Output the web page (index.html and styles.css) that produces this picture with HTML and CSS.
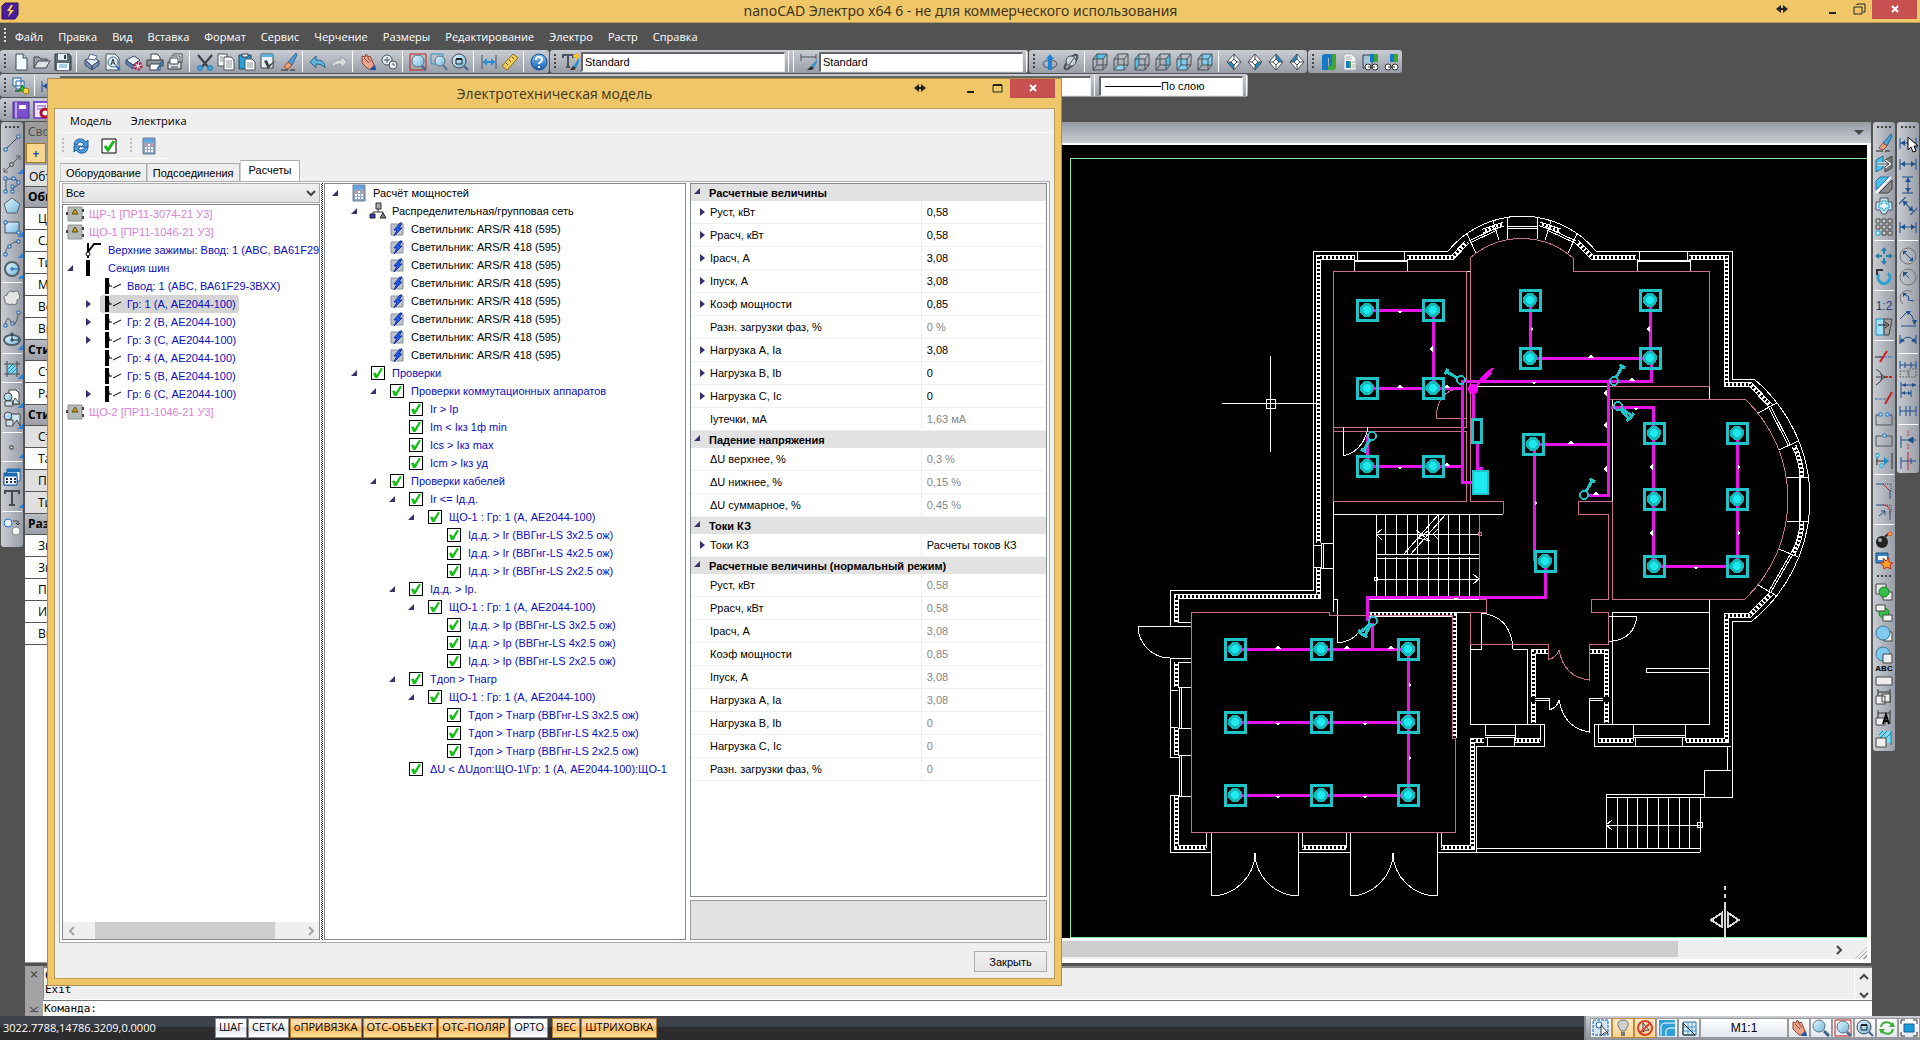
FILE: index.html
```html
<!DOCTYPE html>
<html lang="ru">

<head>
    <meta charset="UTF-8">
    <title>nanoCAD Электро</title>
    <link rel="stylesheet" href="styles.css">
</head>

<body>
    <!-- icons, all drawn on an 18x18 grid -->
    <svg class="sprite" aria-hidden="true">
        <defs>
            <linearGradient id="gblue" x1="0" y1="0" x2="1" y2="1"><stop offset="0" stop-color="#e8f7ff" /><stop offset="1" stop-color="#6fb7dc" /></linearGradient>
            <linearGradient id="ghelp" x1="0" y1="0" x2="0" y2="1"><stop offset="0" stop-color="#7fc0f5" /><stop offset="1" stop-color="#1660b0" /></linearGradient>
            <path id="cube" d="M2 6h10v11H2zM6 1h10v11H6zM2 6l4-5M12 6l4-5M12 17l4-5M2 17l4-5" fill="none" stroke="#4a5056" />
            <path id="dia" d="M9 1l7 8-7 8-7-8zM9 1v5M9 12v5M2 9h4M12 9h4M9 6l3 3-3 3-3-3z" fill="none" stroke="#4a5056" />
            <g id="dimline"><path d="M1 4v11M17 4v11M1 9h16" stroke="#1f4f8c" stroke-width="1" /><path d="M6 6L2 9l4 3zM12 6l4 3-4 3z" fill="#1f4f8c" /></g>
            <g id="linked"><path d="M7 1h4v8H7z" fill="#1478c8" /><path d="M11 1h4v8h-4z" fill="#3fa535" /><circle cx="5" cy="14" r="3" fill="#fff" stroke="#333" /><circle cx="12" cy="14" r="3" fill="#fff" stroke="#333" /><path d="M5 14h7" stroke="#333" /></g>
        </defs>
        <symbol id="i-app" viewBox="0 0 18 18"><path d="M4 1h13v12l-3 4H1V4z" fill="#4b1f9c" stroke="#2c0f6b" /><path d="M10 3L6 9h3l-2 6 6-7H9l3-5z" fill="#ffd84a" /></symbol>
        <symbol id="i-new" viewBox="0 0 18 18"><path d="M4 1h7l4 4v12H4z" fill="#f3fbff" stroke="#3d4854" /><path d="M11 1v4h4" fill="#bfe2f3" stroke="#3d4854" /></symbol>
        <symbol id="i-open" viewBox="0 0 18 18"><path d="M1 15V4h5l2 2h6v3" fill="#9aa0a6" stroke="#3e4347" /><path d="M1 15l4-7h12l-4 7z" fill="#dde2e6" stroke="#3e4347" /></symbol>
        <symbol id="i-save" viewBox="0 0 18 18"><path d="M1 1h14l2 2v14H1z" fill="#5a6a75" stroke="#2f3a42" /><path d="M4 1h9v6H4z" fill="#e7eef2" /><path d="M10 2h2v4h-2z" fill="#31414c" /><path d="M3 10h12v7H3z" fill="#f2f8fb" /><path d="M5 12h8M5 14h8" stroke="#58a9cc" /></symbol>
        <symbol id="i-print" viewBox="0 0 18 18"><path d="M2 7l8-3 6 4-7 5z" fill="#e9eef2" stroke="#384a66" /><path d="M2 7v5l7 5v-4zM9 13v4l7-5V8z" fill="#7790b4" stroke="#384a66" /><path d="M5 6l2-5 7 2-2 4z" fill="#fff" stroke="#4a6aa0" /></symbol>
        <symbol id="i-preview" viewBox="0 0 18 18"><path d="M2 1h9l4 4v12H2z" fill="#eef6fb" stroke="#47525c" /><circle cx="9" cy="9" r="5" fill="#d4ecf8" stroke="#46647a" /><path d="M12 13l4 4" stroke="#2d6fb0" stroke-width="2" /><path d="M7 12l2-6 2 6M8 10h2" fill="none" stroke="#333" /></symbol>
        <symbol id="i-plotset" viewBox="0 0 18 18"><path d="M1 7l8-4 6 4-7 5z" fill="#e9eef2" stroke="#384a66" /><path d="M1 7v4l7 5v-4z" fill="#5b80c0" stroke="#384a66" /><circle cx="13" cy="13" r="3" fill="#fff" stroke="#b0224e" stroke-width="3" stroke-dasharray="2 1" /></symbol>
        <symbol id="i-printer" viewBox="0 0 18 18"><path d="M5 7V1h6l3 3v3" fill="#fff" stroke="#3e4347" /><path d="M1 7h16v6H1z" fill="#8f979d" stroke="#2f3538" /><path d="M4 11h10v6H4z" fill="#fff" stroke="#3e4347" /><path d="M11 17l5-8" stroke="#2d6fb0" stroke-width="2" /></symbol>
        <symbol id="i-plot" viewBox="0 0 18 18"><path d="M6 1h9v9M4 3h9v9" fill="#fff" stroke="#3e4347" /><path d="M1 9h13v7H1z" fill="#d9dfe3" stroke="#2f3538" /><path d="M3 5h8v6H3zM4 14h7" fill="#fff" stroke="#3e4347" /></symbol>
        <symbol id="i-cut" viewBox="0 0 18 18"><path d="M2 2l10 12M16 2L6 14" stroke="#3b3f44" stroke-width="2" /><circle cx="4" cy="15" r="2" fill="none" stroke="#2a8fd0" stroke-width="2" /><circle cx="14" cy="15" r="2" fill="none" stroke="#2a8fd0" stroke-width="2" /></symbol>
        <symbol id="i-copy" viewBox="0 0 18 18"><path d="M1 1h9v12H1z" fill="#fff" stroke="#4b5359" /><path d="M7 4h7l3 3v10H7z" fill="#fff" stroke="#4b5359" /><path d="M9 8h6M9 10h6M9 12h6M9 14h6M3 4h3M3 6h3M3 8h3" stroke="#8b9399" /></symbol>
        <symbol id="i-paste" viewBox="0 0 18 18"><path d="M1 2h12v14H1z" fill="#2a9fd8" stroke="#31414c" /><path d="M4 1h6v3H4z" fill="#e9eef2" stroke="#31414c" /><path d="M7 6h7l3 3v8H7z" fill="#fff" stroke="#4b5359" /><path d="M9 10h6M9 12h6M9 14h6" stroke="#8b9399" /></symbol>
        <symbol id="i-props" viewBox="0 0 18 18"><path d="M2 1h12v14H2z" fill="#e9f1f5" stroke="#3e4347" /><path d="M2 1h12v3H2z" fill="#5cb2d8" /><path d="M5 8l4 8 8-9-7 5-2-5z" fill="#3e4347" /></symbol>
        <symbol id="i-brush" viewBox="0 0 18 18"><path d="M16 0l-8 9 4 3 5-10z" fill="#4d9fd6" stroke="#2c6796" /><path d="M8 9l-4 5 4 2 4-4z" fill="#e9a27f" stroke="#9c4f35" /><path d="M1 17h14" stroke="#222" stroke-dasharray="7 2" /></symbol>
        <symbol id="i-undo" viewBox="0 0 18 18"><path d="M7 3v4c6 0 9 2 9 8-2-3-5-4-9-4v4L1 9z" fill="#5cb2e0" stroke="#2d6384" /></symbol>
        <symbol id="i-redo" viewBox="0 0 18 18"><path d="M11 3v4c-6 0-9 2-9 8 2-3 5-4 9-4v4l6-6z" fill="#d8dbde" stroke="#9a9ea2" /></symbol>
        <symbol id="i-hand" viewBox="0 0 18 18"><path d="M3 3l3 1 1-3 3 3 1-1 2 4 2 5-3 4H9L3 10z" fill="#e9a58d" stroke="#8b4a38" /><path d="M5 5l5 5M8 3l4 6" stroke="#8b4a38" /><path d="M11 16l5-4 1 5h-5z" fill="#1b4fa8" /></symbol>
        <symbol id="i-zoomrt" viewBox="0 0 18 18"><circle cx="7" cy="7" r="5" fill="#e2eef5" stroke="#4b5359" /><path d="M4 7h6M7 4v6" stroke="#4b5359" /><circle cx="13" cy="12" r="4" fill="#f3f6f8" stroke="#4b5359" /><path d="M13 10v2h2" fill="none" stroke="#4b5359" /></symbol>
        <symbol id="i-zoomred" viewBox="0 0 18 18"><path d="M1 1h16v16H1z" fill="none" stroke="#c21e1e" stroke-width="1" /><circle cx="9" cy="8" r="6" fill="url(#gblue)" stroke="#56707f" /><path d="M13 13l4 4" stroke="#4b6a94" stroke-width="3" /></symbol>
        <symbol id="i-zoomwin" viewBox="0 0 18 18"><path d="M1 1h12v10H1z" fill="none" stroke="#2a8fd0" /><circle cx="10" cy="8" r="5" fill="url(#gblue)" stroke="#56707f" /><path d="M13 12l4 5" stroke="#4b6a94" stroke-width="2" /></symbol>
        <symbol id="i-zoom" viewBox="0 0 18 18"><circle cx="7" cy="7" r="6" fill="url(#gblue)" stroke="#56707f" /><path d="M12 12l5 5" stroke="#3f5f8c" stroke-width="3" /></symbol>
        <symbol id="i-zoomext" viewBox="0 0 18 18"><circle cx="8" cy="8" r="7" fill="url(#gblue)" stroke="#3e4347" /><path d="M5 6h6v5H5z" fill="none" stroke="#222" stroke-width="1" /><path d="M5 6h6" stroke="#222" stroke-width="2" /><path d="M13 13l4 4" stroke="#3f5f8c" stroke-width="2" /></symbol>
        <symbol id="i-dist" viewBox="0 0 18 18"><path d="M2 2v14M16 2v14" stroke="#4b5359" /><path d="M3 9h12" stroke="#2a8fd0" stroke-width="2" /><path d="M7 5L3 9l4 4zM11 5l4 4-4 4z" fill="#2a8fd0" /></symbol>
        <symbol id="i-ruler" viewBox="0 0 18 18"><path d="M1 13L12 1l5 4L6 17z" fill="#efcf5c" stroke="#8c6a12" /><path d="M5 10l2 2M8 7l2 2M11 4l2 2" stroke="#6b4f0a" /></symbol>
        <symbol id="i-help" viewBox="0 0 18 18"><circle cx="9" cy="9" r="8" fill="url(#ghelp)" stroke="#1a4f8c" /><path d="M6 7c0-4 6-4 6 0 0 2-3 2-3 4" fill="none" stroke="#fff" stroke-width="2" /><path d="M8 13h2v2H8z" fill="#fff" /></symbol>
        <symbol id="i-tstyle" viewBox="0 0 18 18"><path d="M1 5V2h10v3M6 2v12M4 14h4" fill="none" stroke="#4b5359" stroke-width="2" /><path d="M17 5l-6 9 3 1 3-6z" fill="#2a8fd0" /><path d="M8 17l3-4 3 2-2 2z" fill="#333" /><path d="M14 0v7M11 3h7" stroke="#f6c21a" stroke-width="2" /></symbol>
        <symbol id="i-dstyle" viewBox="0 0 18 18"><path d="M1 1v7M16 1v5M1 4h15" fill="none" stroke="#4b5359" /><path d="M17 6l-6 7 3 2 3-6z" fill="#3795c9" /><path d="M7 17l4-4 3 2-2 2z" fill="#333" /></symbol>
        <symbol id="i-orbit" viewBox="0 0 18 18"><ellipse cx="9" cy="11" rx="7" ry="4" fill="none" stroke="#4b5359" /><path d="M9 1l4 5h-2v11H7V6H5z" fill="#1f83d8" /></symbol>
        <symbol id="i-planet" viewBox="0 0 18 18"><ellipse cx="9" cy="9" rx="9" ry="3" transform="rotate(-50 9 9)" fill="none" stroke="#4b5359" stroke-width="2" /><circle cx="9" cy="8" r="5" fill="#c9d3da" stroke="#4b5359" /><path d="M7 12l5-7" stroke="#4b5359" /></symbol>
        <symbol id="i-cube1" viewBox="0 0 18 18"><path d="M2 6l4-5h10l-4 5z" fill="#55c1ec" /><use href="#cube" /></symbol>
        <symbol id="i-cube2" viewBox="0 0 18 18"><path d="M2 17l4-5h10l-4 5z" fill="#8fd4f0" /><use href="#cube" /></symbol>
        <symbol id="i-cube3" viewBox="0 0 18 18"><path d="M2 6l4-5v11l-4 5z" fill="#55c1ec" /><use href="#cube" /></symbol>
        <symbol id="i-cube4" viewBox="0 0 18 18"><path d="M12 6l4-5v11l-4 5z" fill="#55c1ec" /><use href="#cube" /></symbol>
        <symbol id="i-cube5" viewBox="0 0 18 18"><path d="M2 6h10v11H2z" fill="#7fcdee" /><use href="#cube" /></symbol>
        <symbol id="i-cube6" viewBox="0 0 18 18"><path d="M6 1h10v11H6z" fill="#7fcdee" /><use href="#cube" /></symbol>
        <symbol id="i-dia1" viewBox="0 0 18 18"><path d="M9 1l7 8-7 8-7-8z" fill="#fff" /><path d="M2 9l7 8v-5L6 9z" fill="#1c8cc4" /><use href="#dia" /></symbol>
        <symbol id="i-dia2" viewBox="0 0 18 18"><path d="M9 1l7 8-7 8-7-8z" fill="#fff" /><path d="M16 9l-7 8v-5l3-3z" fill="#1c8cc4" /><use href="#dia" /></symbol>
        <symbol id="i-dia3" viewBox="0 0 18 18"><path d="M9 1l7 8-7 8-7-8z" fill="#fff" /><path d="M16 9L9 1v5l3 3z" fill="#1c8cc4" /><use href="#dia" /></symbol>
        <symbol id="i-dia4" viewBox="0 0 18 18"><path d="M9 1l7 8-7 8-7-8z" fill="#fff" /><path d="M2 9l7-8v5L6 9z" fill="#1c8cc4" /><use href="#dia" /></symbol>
        <symbol id="i-logo" viewBox="0 0 18 18"><path d="M2 17V4q0-3 3-3h7v12h-3V5H8v12z" fill="#1478c8" /><path d="M12 1h4v13q0 3-3 3H8v-4h4z" fill="#3fa535" /></symbol>
        <symbol id="i-logodoc" viewBox="0 0 18 18"><path d="M3 1h8l4 4v12H3z" fill="#f3f4f5" stroke="#a8adb2" /><path d="M5 4h5M5 6h6M11 9h3M11 12h3M11 14h3" stroke="#a8adb2" /><path d="M5 8h3v7H5z" fill="#1478c8" /><path d="M8 8h2v7H8z" fill="#3fa535" /></symbol>
        <symbol id="i-logolink" viewBox="0 0 18 18"><use href="#linked" /></symbol>
        <symbol id="i-logoboard" viewBox="0 0 18 18"><path d="M1 2h9v13H1z" fill="#a9c5d5" stroke="#31414c" /><use href="#linked" x="1" /></symbol>
        <symbol id="i-layers" viewBox="0 0 18 18"><path d="M1 1h8v8H1zM4 4h8v8H4z" fill="#fff" stroke="#1b5fb0" /><path d="M3 14h4l3-6 4 6z" fill="#2db82d" stroke="#176b17" /><circle cx="14" cy="14" r="3" fill="#f6d34a" stroke="#9c7a12" /></symbol>
        <symbol id="i-book" viewBox="0 0 18 18"><path d="M1 1h16v16H1z" fill="#7b4fd0" stroke="#4b2a94" /><path d="M4 1v16" stroke="#fff" /><path d="M7 4h7v4H7z" fill="#fff" /></symbol>
        <symbol id="i-bookgear" viewBox="0 0 18 18"><path d="M1 1h16v16H1z" fill="#efe9fb" stroke="#7b4fd0" stroke-width="2" /><path d="M4 5h9M4 8h5" stroke="#7b4fd0" /><circle cx="12" cy="12" r="4" fill="#fff" stroke="#b01030" stroke-width="3" /></symbol>
        <symbol id="i-line" viewBox="0 0 18 18"><path d="M3 15L15 3" stroke="#3a4a5c" /><path d="M1 14h3v3H1zM14 1h3v3h-3z" fill="#dff0ff" stroke="#1a5fa8" /></symbol>
        <symbol id="i-xline" viewBox="0 0 18 18"><path d="M1 17L17 1M1 13v4h4M13 1h4v4" fill="none" stroke="#555" /><path d="M7 8h3v3H7z" fill="#fff" stroke="#333" /></symbol>
        <symbol id="i-pline" viewBox="0 0 18 18"><path d="M3 16V3h8q4 0 4 4t-5 4v5" fill="none" stroke="#3a4a5c" /><path d="M1 1h3v3H1zM9 1h3v3H9zM1 14h3v3H1zM8 14h3v3H8zM8 9h3v3H8zM14 5h3v3h-3z" fill="#dff0ff" stroke="#1a5fa8" /></symbol>
        <symbol id="i-poly" viewBox="0 0 18 18"><path d="M9 1l8 6-3 9H4L1 7z" fill="url(#gblue)" stroke="#56606a" /></symbol>
        <symbol id="i-rect" viewBox="0 0 18 18"><path d="M2 4h14v11H2z" fill="url(#gblue)" stroke="#4b5359" /><path d="M1 3h3v3H1zM14 13h3v3h-3z" fill="#dff0ff" stroke="#1a5fa8" /></symbol>
        <symbol id="i-arc" viewBox="0 0 18 18"><path d="M2 16Q3 4 16 2" fill="none" stroke="#555" /><path d="M1 14h3v3H1zM5 6h3v3H5zM14 1h3v3h-3z" fill="#dff0ff" stroke="#1a5fa8" /></symbol>
        <symbol id="i-circle" viewBox="0 0 18 18"><circle cx="9" cy="9" r="7" fill="url(#gblue)" stroke="#56606a" stroke-width="2" /><path d="M9 9h7M8 8h2v2H8z" fill="#fff" stroke="#1a5fa8" /></symbol>
        <symbol id="i-cloud" viewBox="0 0 18 18"><path d="M5 15Q1 15 2 11-1 7 4 6 6 0 10 3q5-3 6 2 2 5-2 6 1 6-5 4-2 2-4 0z" fill="#e3e4e6" stroke="#66696d" /></symbol>
        <symbol id="i-spline" viewBox="0 0 18 18"><path d="M2 16Q4 3 8 12t8-10" fill="none" stroke="#555" /><path d="M1 14h3v3H1zM8 12h3v3H8zM14 1h3v3h-3z" fill="#dff0ff" stroke="#1a5fa8" /></symbol>
        <symbol id="i-ellipse" viewBox="0 0 18 18"><ellipse cx="9" cy="9" rx="8" ry="5" fill="url(#gblue)" stroke="#56606a" stroke-width="2" /><path d="M9 9V3M9 9h7M8 2h2v2H8zM8 8h2v2H8zM15 8h2v2h-2z" fill="#fff" stroke="#2b3a48" /></symbol>
        <symbol id="i-hatch" viewBox="0 0 18 18"><path d="M4 4h6q4 3 4 10H4z" fill="#7fd8ef" /><path d="M1 4h16M1 14h16M4 1v16M14 1v16" stroke="#44494e" /><path d="M4 10l6-6M4 14l8-8M8 14l6-6" stroke="#167f9c" /></symbol>
        <symbol id="i-block" viewBox="0 0 18 18"><path d="M6 1h7l3 3v11H6z" fill="#fff" stroke="#444" /><circle cx="5" cy="8" r="4" fill="url(#gblue)" stroke="#444" /><path d="M2 12h8v5H2zM9 15l3-6 5 6z" fill="#cfe4ee" stroke="#444" /></symbol>
        <symbol id="i-block2" viewBox="0 0 18 18"><circle cx="5" cy="6" r="4" fill="url(#gblue)" stroke="#444" /><path d="M3 10h7v6H3zM9 4h8v12l-3-6-4 5" fill="#cfe4ee" stroke="#444" /></symbol>
        <symbol id="i-point" viewBox="0 0 18 18"><path d="M7 7h3v3H7z" fill="#fff" stroke="#333" /></symbol>
        <symbol id="i-table" viewBox="0 0 18 18"><path d="M4 1h13v12H4z" fill="#fff" stroke="#1a5fa8" /><path d="M4 1h13v3H4zM1 5h13v3H1z" fill="#1a72b8" /><path d="M1 5h13v12H1z" fill="none" stroke="#1a5fa8" /><path d="M1 8h13v9H1z" fill="#eaf6fc" stroke="#1a5fa8" /><path d="M3 11h10M3 14h10" stroke="#333" stroke-dasharray="2 2" stroke-width="2" /></symbol>
        <symbol id="i-text" viewBox="0 0 18 18"><path d="M2 5V2h14v3M9 2v14M6 16h6" fill="none" stroke="#44494e" stroke-width="2" /></symbol>
        <symbol id="i-group" viewBox="0 0 18 18"><circle cx="5" cy="5" r="4" fill="#e8f4ff" stroke="#1a72d0" /><circle cx="13" cy="13" r="4" fill="#fff" stroke="#888" /><path d="M10 3h5v4M13 5l2 2 2-2" fill="none" stroke="#444" /></symbol>
        <symbol id="i-mirror" viewBox="0 0 18 18"><path d="M1 5l7-4v12l-7 4z" fill="#4cc0ea" stroke="#25739a" /><path d="M10 5l7-4v12l-7 4z" fill="#777" stroke="#444" /><path d="M3 9h9M10 6l4 3-4 3" fill="none" stroke="#fff" stroke-width="3" /><path d="M3 9h10M10 6l4 3-4 3" fill="none" stroke="#333" /></symbol>
        <symbol id="i-offset" viewBox="0 0 18 18"><path d="M1 5l4-4h9L1 14z" fill="#4cc0ea" stroke="#25739a" /><path d="M4 17L17 4v9l-4 4z" fill="#8a8a8a" stroke="#444" /><path d="M1 17L16 1" stroke="#fff" stroke-width="2" /></symbol>
        <symbol id="i-contour" viewBox="0 0 18 18"><path d="M5 1h8v4h4v8h-4l-2 4H7l-2-4H1V5h4z" fill="#bfe6f5" stroke="#4b5359" /><path d="M7 4h4v3h3v4h-3l-2 3-2-3H4V7h3z" fill="#dff4fc" stroke="#2b9fd0" /></symbol>
        <symbol id="i-array" viewBox="0 0 18 18"><path d="M1 1h4v4H1zM7 1h4v4H7zM13 1h4v4h-4zM1 7h4v4H1zM7 7h4v4H7zM13 7h4v4h-4zM7 13h4v4H7zM13 13h4v4h-4z" fill="#ccc" stroke="#444" /><path d="M1 13h4v4H1z" fill="#bff0ff" stroke="#18a0d8" /></symbol>
        <symbol id="i-move" viewBox="0 0 18 18"><path d="M9 0l3 4H6zM9 18l3-4H6zM0 9l4-3v6zM18 9l-4-3v6z" fill="#2b7fa8" /><path d="M9 4v10M4 9h10" stroke="#2b7fa8" stroke-width="2" stroke-dasharray="3 4" /></symbol>
        <symbol id="i-rotate" viewBox="0 0 18 18"><path d="M13 5a6 6 0 1 1-9 1" fill="none" stroke="#2ba0d0" stroke-width="3" /><path d="M2 7V2h6" fill="none" stroke="#333" stroke-width="2" /></symbol>
        <symbol id="i-stretch" viewBox="0 0 18 18"><path d="M1 1h8v16H1z" fill="#9fe0f7" stroke="#1c8cc4" /><path d="M9 1h8l-3 16H9z" fill="#a2a2a2" stroke="#444" /><path d="M3 7h9M10 4l4 3-4 3" fill="none" stroke="#222" /></symbol>
        <symbol id="i-trim" viewBox="0 0 18 18"><path d="M0 10h8" stroke="#222" /><path d="M9 10h9" stroke="#2b6fb0" stroke-dasharray="3 1" /><path d="M5 15L12 4" stroke="#c22" stroke-width="2" /></symbol>
        <symbol id="i-extend" viewBox="0 0 18 18"><path d="M1 1q6 3 6 8t-6 8M1 9h8M6 6l4 3-4 3" fill="none" stroke="#444" /><path d="M10 9h8" stroke="#c22" stroke-dasharray="3 1" stroke-width="2" /></symbol>
        <symbol id="i-extend2" viewBox="0 0 18 18"><path d="M0 10h11" stroke="#2b6fb0" stroke-dasharray="3 1" /><path d="M10 15L17 3" stroke="#c22" stroke-width="2" /></symbol>
        <symbol id="i-break" viewBox="0 0 18 18"><path d="M5 5H1v10h16V5h-4" fill="none" stroke="#555" /><path d="M4 3h3v3H4zM11 3h3v3h-3z" fill="#dff0ff" stroke="#1a72d0" /></symbol>
        <symbol id="i-break1" viewBox="0 0 18 18"><path d="M7 5H1v10h16V5h-6" fill="none" stroke="#555" /><path d="M8 3h3v3H8z" fill="#dff0ff" stroke="#1a72d0" /></symbol>
        <symbol id="i-join" viewBox="0 0 18 18"><path d="M2 1v12M17 1v16M1 9h11" stroke="#333" /><path d="M9 5l5 4-5 4z" fill="#1c8cc4" /><path d="M1 2h3v3H1zM5 12h3v3H5z" fill="#dff" stroke="#18a0d8" /></symbol>
        <symbol id="i-chamfer" viewBox="0 0 18 18"><path d="M1 3h7M15 10v8" stroke="#2b4f7c" /><path d="M8 3l7 7" stroke="#c22" stroke-width="1" /><path d="M8 3h8v7" fill="none" stroke="#2b4f7c" stroke-dasharray="1 1" /></symbol>
        <symbol id="i-fillet" viewBox="0 0 18 18"><path d="M1 3h7M15 10v8M4 14l6-5M6 9h4v4" fill="none" stroke="#2b4f7c" stroke-width="1" /><path d="M8 3q7 0 7 8" fill="none" stroke="#c22" /><path d="M8 3h8v7" fill="none" stroke="#2b4f7c" stroke-dasharray="1 1" /></symbol>
        <symbol id="i-bomb" viewBox="0 0 18 18"><circle cx="7" cy="11" r="6" fill="#222" /><circle cx="5" cy="9" r="2" fill="#aaa" /><path d="M10 6l3-3" stroke="#333" stroke-width="2" /><circle cx="15" cy="3" r="2" fill="#ffb04a" stroke="#e2502a" /></symbol>
        <symbol id="i-explode" viewBox="0 0 18 18"><path d="M1 1h12v10H1z" fill="#3a86c8" stroke="#1b4a7c" /><path d="M3 4h9v4H3z" fill="#fff" /><path d="M8 6l3 3 3-3 0 4 4 1-3 2 1 4-4-2-3 2-1-4-3-2 4-1z" fill="#f2a02a" stroke="#c2301a" /></symbol>
        <symbol id="i-front" viewBox="0 0 18 18"><path d="M1 1h10v10H1zM8 9h9v8H8z" fill="#e6e6e6" stroke="#444" /><circle cx="9" cy="9" r="5" fill="#35c04a" stroke="#1a7a2a" /></symbol>
        <symbol id="i-back" viewBox="0 0 18 18"><circle cx="9" cy="9" r="5" fill="#35c04a" stroke="#1a7a2a" /><path d="M1 1h9v6H1zM8 11h9v6H8z" fill="#f2f2f2" stroke="#444" /></symbol>
        <symbol id="i-above" viewBox="0 0 18 18"><path d="M9 7h8v9H9z" fill="#eee" stroke="#444" /><circle cx="8" cy="8" r="7" fill="#7fc8ee" stroke="#36779c" /></symbol>
        <symbol id="i-under" viewBox="0 0 18 18"><circle cx="8" cy="8" r="7" fill="#7fc8ee" stroke="#36779c" /><path d="M8 8h9v9H8z" fill="#eee" stroke="#444" /></symbol>
        <symbol id="i-sheet" viewBox="0 0 18 18"><path d="M1 9h16v8H1z" fill="#eee" stroke="#444" /></symbol>
        <symbol id="i-dimfront" viewBox="0 0 18 18"><path d="M3 1v14M15 1v14M3 4h12" stroke="#333" /><path d="M1 8h9v8H1zM7 6h8v8H7z" fill="#eee" stroke="#444" /></symbol>
        <symbol id="i-allfront" viewBox="0 0 18 18"><path d="M3 1v14M15 1v14M3 4h12" stroke="#333" /><path d="M1 9h9v7H1z" fill="#eee" stroke="#444" /><path d="M8 15l3-9 3 9M9 12h4" fill="none" stroke="#000" stroke-width="2" /></symbol>
        <symbol id="i-hatchback" viewBox="0 0 18 18"><path d="M4 1h12v12H4z" fill="#7fd8ef" /><path d="M4 5l4-4M4 9l8-8M8 11l8-8M16 1v14" stroke="#167f9c" /><path d="M1 8h10v9H1z" fill="#eee" stroke="#444" /></symbol>
        <symbol id="i-dimh" viewBox="0 0 18 18"><use href="#dimline" /></symbol>
        <symbol id="i-dimv" viewBox="0 0 18 18"><use href="#dimline" transform="rotate(90 9 9)" /></symbol>
        <symbol id="i-dimd" viewBox="0 0 18 18"><use href="#dimline" transform="rotate(45 9 9)" /></symbol>
        <symbol id="i-dimdia" viewBox="0 0 18 18"><circle cx="9" cy="9" r="8" fill="none" stroke="#777" /><path d="M4 4l10 10" stroke="#1f4f8c" /><path d="M4 4h4L4 8zM14 14h-4l4-4z" fill="#1f4f8c" /></symbol>
        <symbol id="i-dimrad" viewBox="0 0 18 18"><circle cx="9" cy="9" r="8" fill="none" stroke="#777" /><path d="M5 5l5 5" stroke="#1f4f8c" /><path d="M4 4h5L4 9z" fill="#1f4f8c" /></symbol>
        <symbol id="i-dimjog" viewBox="0 0 18 18"><path d="M13 3A7 7 0 1 0 4 15" fill="none" stroke="#777" /><path d="M4 4l6 4-1 3 6 1" fill="none" stroke="#1f4f8c" /><path d="M4 4h4L4 8z" fill="#1f4f8c" /></symbol>
        <symbol id="i-dimang" viewBox="0 0 18 18"><path d="M2 16h15M1 9l7-7q7 3 7 12" fill="none" stroke="#1f4f8c" /><path d="M7 1h5l-3 4zM13 10h5l-2 5z" fill="#1f4f8c" /></symbol>
        <symbol id="i-dimarc" viewBox="0 0 18 18"><path d="M1 4v9M17 4v9M2 11Q9 1 16 11" fill="none" stroke="#1f4f8c" /><path d="M1 12l1-5 4 3zM17 12l-1-5-4 3z" fill="#1f4f8c" /></symbol>
        <symbol id="i-dimq" viewBox="0 0 18 18"><path d="M1 1v8M17 1v8M6 2v6M12 2v6M1 5h16" stroke="#1f4f8c" /><path d="M1 11h8v6H1zM10 9h7v8h-7z" fill="none" stroke="#666" stroke-dasharray="2 1" /></symbol>
        <symbol id="i-dimbase" viewBox="0 0 18 18"><path d="M2 1v16M2 4h15M2 12h10M12 9v7" stroke="#1f4f8c" /><path d="M3 4l4-2v4zM17 4l-4-2v4zM3 12l3-2v4zM12 12l-3-2v4z" fill="#1f4f8c" /></symbol>
        <symbol id="i-dimcont" viewBox="0 0 18 18"><path d="M1 4v10M17 4v10M7 4v10M11 4v10M1 9h16" stroke="#1f4f8c" /></symbol>
        <symbol id="i-dimcut" viewBox="0 0 18 18"><path d="M2 5v12M2 9h15M9 9l5-3v6z" fill="#1f4f8c" stroke="#1f4f8c" /><path d="M9 0v5M9 13v5" stroke="#c22" stroke-dasharray="2 1" /></symbol>
        <symbol id="i-dimcut2" viewBox="0 0 18 18"><path d="M2 5v12M2 9h15M12 6v6" stroke="#1f4f8c" /><path d="M9 0v18" stroke="#c22" stroke-width="1" /></symbol>
        <symbol id="i-refresh" viewBox="0 0 18 18"><path d="M2 8c0-7 9-8 12-3l2-2v7H9l3-3C9 4 6 5 5 8z" fill="#4a9be0" stroke="#1f5fa0" /><path d="M16 10c0 7-9 8-12 3l-2 2V9h7l-3 3c3 2 6 1 7-2z" fill="#4a9be0" stroke="#1f5fa0" /></symbol>
        <symbol id="i-check" viewBox="0 0 18 18"><path d="M2 2h14v14H2z" fill="#fff" stroke="#000" stroke-width="1" /><path d="M5 9l3 4 6-9" fill="none" stroke="#16b91a" stroke-width="3" /></symbol>
        <symbol id="i-calc" viewBox="0 0 18 18"><path d="M3 1h12v16H3z" fill="#8fa6c4" stroke="#6b7c98" /><path d="M4 2h10v3H4z" fill="#5aa5e8" /><path d="M5 8h8M5 11h8M5 14h8" stroke="#fff" stroke-width="2" stroke-dasharray="2 1" /><path d="M5 8h2M11 8h2" stroke="#c22" stroke-width="1" /></symbol>
        <symbol id="i-net" viewBox="0 0 18 18"><path d="M7 1h5v6H7z" fill="#aaa" stroke="#333" /><path d="M9 7v3M4 13v-3h10v3" fill="none" stroke="#333" /><path d="M1 12h5v4H1z" fill="#3a3ac0" stroke="#222" /><path d="M11 16l3-5 3 5z" fill="#888" stroke="#222" /></symbol>
        <symbol id="i-lamp" viewBox="0 0 18 18"><path d="M3 4h12v11H3z" fill="#bfc3cc" stroke="#8a8f99" /><path d="M12 3L6 10h3l-3 6 8-8h-3l3-5z" fill="#1f5ff0" stroke="#1232a0" /></symbol>
        <symbol id="i-box" viewBox="0 0 18 18"><path d="M2 2h14v14H2z" fill="#b3bab9" stroke="#8d9493" /><path d="M9 4l3 5H6z" fill="#c8a415" stroke="#5d4b06" /><path d="M16 4h2v3h-2zM16 11h2v3h-2zM0 7h2v3H0z" fill="#444" /></symbol>
        <symbol id="i-input" viewBox="0 0 18 18"><path d="M3 2v15M3 11l6-8h7" fill="none" stroke="#000" stroke-width="2" /><circle cx="3" cy="13" r="2" fill="#fff" stroke="#000" /></symbol>
        <symbol id="i-bus" viewBox="0 0 18 18"><path d="M1 1h4v16H1z" /></symbol>
        <symbol id="i-breaker" viewBox="0 0 18 18"><path d="M1 1h4v16H1z" /><path d="M5 6v4M5 9h3M9 11l8-4" stroke="#000" fill="none" /></symbol>
        <symbol id="i-bulb" viewBox="0 0 18 18"><path d="M9 1q6 0 5 6l-3 5H7L4 7q-1-6 5-6z" fill="#cfcfcf" stroke="#777" /><path d="M7 13h4v4H7z" fill="#777" /></symbol>
        <symbol id="i-select" viewBox="0 0 18 18"><path d="M1 1h15v15H1z" fill="#cfe9fa" stroke="#1a5fa8" stroke-dasharray="3 1" /><circle cx="7" cy="6" r="3" fill="#fff" stroke="#1a5fa8" /><path d="M9 6v11l3-3h4z" fill="#fff" stroke="#333" /></symbol>
        <symbol id="i-nosel" viewBox="0 0 18 18"><path d="M7 4v9l3-2h3z" fill="#fff" stroke="#333" /><circle cx="9" cy="9" r="7" fill="none" stroke="#d8402a" stroke-width="2" /><path d="M4 14L14 4" stroke="#d8402a" stroke-width="2" /></symbol>
        <symbol id="i-tabs" viewBox="0 0 18 18"><path d="M1 1h16v16H1z" fill="#2f9fd8" /><path d="M3 17V8q0-4 5-4h9M8 17v-5q0-3 4-3h5" fill="none" stroke="#fff" /></symbol>
        <symbol id="i-grid" viewBox="0 0 18 18"><path d="M3 3h13v13H3z" fill="#dff1fa" stroke="#2b6f9c" /><path d="M8 3v13M12 3v13M3 8h13M3 12h13" stroke="#4a9bc8" /><path d="M3 4l12 12H3z" stroke="#333" fill="none" /></symbol>
        <symbol id="i-regen" viewBox="0 0 18 18"><path d="M3 8c1-6 8-6 11-2M15 10c-1 6-8 6-11 2" fill="none" stroke="#3fae3a" stroke-width="2" /><path d="M11 8h6l-2-5zM7 10H1l2 5z" fill="#3fae3a" /></symbol>
        <symbol id="i-full" viewBox="0 0 18 18"><path d="M1 5V1h4M13 1h4v4M17 13v4h-4M5 17H1v-4" fill="none" stroke="#333" /><path d="M4 5h10v8H4z" fill="#1c9ade" stroke="#1b5f90" /></symbol>
        <symbol id="i-hresize" viewBox="0 0 18 18"><path d="M5 9h8" stroke="#222" stroke-width="2" /><path d="M8 5v8L3 9zM10 5v8l5-4z" fill="#222" /></symbol>
        <symbol id="i-min" viewBox="0 0 18 18"><path d="M5 12h7v2H5z" fill="#222" /></symbol>
        <symbol id="i-max" viewBox="0 0 18 18"><path d="M5 6h9v7H5z" fill="none" stroke="#222" /><path d="M5 5h9v2H5z" fill="#222" /></symbol>
        <symbol id="i-restore" viewBox="0 0 18 18"><path d="M7 5V4h8v8h-2M4 7h8v7H4z" fill="none" stroke="#222" /></symbol>
        <symbol id="i-x" viewBox="0 0 18 18"><path d="M6 6l6 6M12 6l-6 6" stroke="#fff" stroke-width="2" /></symbol>
        <symbol id="i-left" viewBox="0 0 18 18"><path d="M11 5L7 9l4 4" fill="none" stroke="currentColor" stroke-width="2" /></symbol>
        <symbol id="i-right" viewBox="0 0 18 18"><path d="M7 5l4 4-4 4" fill="none" stroke="currentColor" stroke-width="2" /></symbol>
        <symbol id="i-up" viewBox="0 0 18 18"><path d="M5 11l4-4 4 4" fill="none" stroke="currentColor" stroke-width="2" /></symbol>
        <symbol id="i-down" viewBox="0 0 18 18"><path d="M5 7l4 4 4-4" fill="none" stroke="currentColor" stroke-width="2" /></symbol>
    </svg>

    <div class="app">
        <header class="titlebar">
            <svg class="icon"><use href="#i-app" /></svg>
            <h1>nanoCAD Электро x64 6 - не для коммерческого использования</h1>
            <div class="winbtns">
                <button class="resize" aria-label="Растянуть"><svg class="icon"><use href="#i-hresize" /></svg></button>
                <button aria-label="Свернуть"><svg class="icon"><use href="#i-min" /></svg></button>
                <button aria-label="Восстановить"><svg class="icon"><use href="#i-restore" /></svg></button>
                <button class="close" aria-label="Закрыть окно"><svg class="icon"><use href="#i-x" /></svg></button>
            </div>
        </header>

        <nav class="menubar">
            <i class="grip"></i>
            <button>Файл</button><button>Правка</button><button>Вид</button><button>Вставка</button><button>Формат</button><button>Сервис</button><button>Черчение</button><button>Размеры</button><button>Редактирование</button><button>Электро</button><button>Растр</button><button>Справка</button>
        </nav>

        <div class="toolrow">
            <div class="toolbar">
                <i class="grip"></i>
                <button aria-label="Новый"><svg class="icon"><use href="#i-new" /></svg></button>
                <button aria-label="Открыть"><svg class="icon"><use href="#i-open" /></svg></button>
                <button aria-label="Сохранить"><svg class="icon"><use href="#i-save" /></svg></button>
                <i class="sep"></i>
                <button aria-label="Печать"><svg class="icon"><use href="#i-print" /></svg></button>
                <button aria-label="Просмотр"><svg class="icon"><use href="#i-preview" /></svg></button>
                <button aria-label="Настройка печати"><svg class="icon"><use href="#i-plotset" /></svg></button>
                <button aria-label="Принтер"><svg class="icon"><use href="#i-printer" /></svg></button>
                <button aria-label="Пакетная печать"><svg class="icon"><use href="#i-plot" /></svg></button>
                <i class="sep"></i>
                <button aria-label="Вырезать"><svg class="icon"><use href="#i-cut" /></svg></button>
                <button aria-label="Копировать"><svg class="icon"><use href="#i-copy" /></svg></button>
                <button aria-label="Вставить"><svg class="icon"><use href="#i-paste" /></svg></button>
                <button aria-label="Свойства"><svg class="icon"><use href="#i-props" /></svg></button>
                <button aria-label="Кисть"><svg class="icon"><use href="#i-brush" /></svg></button>
                <i class="sep"></i>
                <button aria-label="Отменить"><svg class="icon"><use href="#i-undo" /></svg></button>
                <button aria-label="Вернуть"><svg class="icon"><use href="#i-redo" /></svg></button>
                <i class="sep"></i>
                <button aria-label="Панорама"><svg class="icon"><use href="#i-hand" /></svg></button>
                <button aria-label="Зум"><svg class="icon"><use href="#i-zoomrt" /></svg></button>
                <i class="sep"></i>
                <button aria-label="Показать рамкой"><svg class="icon"><use href="#i-zoomred" /></svg></button>
                <button aria-label="Показать окно"><svg class="icon"><use href="#i-zoomwin" /></svg></button>
                <button aria-label="Показать все"><svg class="icon"><use href="#i-zoomext" /></svg></button>
                <i class="sep"></i>
                <button aria-label="Расстояние"><svg class="icon"><use href="#i-dist" /></svg></button>
                <button aria-label="Линейка"><svg class="icon"><use href="#i-ruler" /></svg></button>
                <i class="sep"></i>
                <button aria-label="Справка"><svg class="icon"><use href="#i-help" /></svg></button>
            </div>
            <div class="toolbar">
                <i class="grip"></i>
                <button aria-label="Стиль текста"><svg class="icon"><use href="#i-tstyle" /></svg></button>
                <select class="style" aria-label="Текстовый стиль"><option>Standard</option></select>
                <i class="sep thin"></i>
                <i class="sep"></i>
                <button aria-label="Размерный стиль"><svg class="icon"><use href="#i-dstyle" /></svg></button>
                <select class="style" aria-label="Стиль размеров"><option>Standard</option></select>
                <i class="sep thin"></i>
            </div>
            <div class="toolbar">
                <i class="grip"></i>
                <button aria-label="Орбита"><svg class="icon"><use href="#i-orbit" /></svg></button>
                <button aria-label="Вращение"><svg class="icon"><use href="#i-planet" /></svg></button>
                <i class="sep"></i>
                <button aria-label="Сверху"><svg class="icon"><use href="#i-cube1" /></svg></button>
                <button aria-label="Снизу"><svg class="icon"><use href="#i-cube2" /></svg></button>
                <button aria-label="Слева"><svg class="icon"><use href="#i-cube3" /></svg></button>
                <button aria-label="Справа"><svg class="icon"><use href="#i-cube4" /></svg></button>
                <button aria-label="Спереди"><svg class="icon"><use href="#i-cube5" /></svg></button>
                <button aria-label="Сзади"><svg class="icon"><use href="#i-cube6" /></svg></button>
                <i class="sep"></i>
                <button aria-label="ЮЗ изометрия"><svg class="icon"><use href="#i-dia1" /></svg></button>
                <button aria-label="ЮВ изометрия"><svg class="icon"><use href="#i-dia2" /></svg></button>
                <button aria-label="СВ изометрия"><svg class="icon"><use href="#i-dia3" /></svg></button>
                <button aria-label="СЗ изометрия"><svg class="icon"><use href="#i-dia4" /></svg></button>
            </div>
            <div class="toolbar">
                <i class="grip"></i>
                <button aria-label="База"><svg class="icon"><use href="#i-logo" /></svg></button>
                <button aria-label="Отчет"><svg class="icon"><use href="#i-logodoc" /></svg></button>
                <button aria-label="Вставить связь"><svg class="icon"><use href="#i-logoboard" /></svg></button>
                <button aria-label="Связь"><svg class="icon"><use href="#i-logolink" /></svg></button>
            </div>
        </div>

        <div class="toolrow">
            <div class="toolbar layers">
                <i class="grip"></i>
                <button aria-label="Слои"><svg class="icon"><use href="#i-layers" /></svg></button>
                <i class="sep"></i>
                <button aria-label="Размер"><svg class="icon"><use href="#i-dimh" /></svg></button>
                <select class="grow" aria-label="Слой"><option></option></select>
                <i class="sep"></i>
                <select class="ltype" aria-label="Тип линий"><option>По слою</option></select>
                <i class="sep thin"></i>
            </div>
        </div>

        <div class="toolrow">
            <div class="toolbar">
                <i class="grip"></i>
                <button aria-label="Книга"><svg class="icon"><use href="#i-book" /></svg></button>
                <button aria-label="Настройки"><svg class="icon"><use href="#i-bookgear" /></svg></button>
            </div>
        </div>

        <main class="work">
            <div class="vbar withtri">
                <i class="grip"></i>
                <button aria-label="Отрезок"><svg class="icon"><use href="#i-line" /></svg></button>
                <button aria-label="Прямая" class="more"><svg class="icon"><use href="#i-xline" /></svg></button>
                <button aria-label="Полилиния"><svg class="icon"><use href="#i-pline" /></svg></button>
                <button aria-label="Многоугольник"><svg class="icon"><use href="#i-poly" /></svg></button>
                <button aria-label="Прямоугольник" class="more"><svg class="icon"><use href="#i-rect" /></svg></button>
                <button aria-label="Дуга" class="more"><svg class="icon"><use href="#i-arc" /></svg></button>
                <button aria-label="Окружность" class="more"><svg class="icon"><use href="#i-circle" /></svg></button>
                <i class="sep"></i>
                <button aria-label="Облако"><svg class="icon"><use href="#i-cloud" /></svg></button>
                <button aria-label="Сплайн"><svg class="icon"><use href="#i-spline" /></svg></button>
                <button aria-label="Эллипс" class="more"><svg class="icon"><use href="#i-ellipse" /></svg></button>
                <i class="sep"></i>
                <button aria-label="Штриховка" class="more"><svg class="icon"><use href="#i-hatch" /></svg></button>
                <i class="sep"></i>
                <button aria-label="Вставка блока" class="more"><svg class="icon"><use href="#i-block" /></svg></button>
                <button aria-label="Создать блок" class="more"><svg class="icon"><use href="#i-block2" /></svg></button>
                <i class="sep"></i>
                <button aria-label="Точка" class="more"><svg class="icon"><use href="#i-point" /></svg></button>
                <i class="sep"></i>
                <button aria-label="Таблица"><svg class="icon"><use href="#i-table" /></svg></button>
                <button aria-label="Текст" class="more"><svg class="icon"><use href="#i-text" /></svg></button>
                <i class="sep"></i>
                <button aria-label="Группа"><svg class="icon"><use href="#i-group" /></svg></button>
            </div>

            <aside class="props">
                <h2>Свойства</h2>
                <div class="propbar"><button aria-label="Добавить">+</button></div>
                <p class="obj">Объект</p>
                <h3>Общие</h3>
                <p>Цвет</p>
                <p>Слой</p>
                <p>Тип</p>
                <p>Масштаб</p>
                <p>Вес</p>
                <p>Высота</p>
                <h3>Стили</h3>
                <p>Стиль</p>
                <p>Размер</p>
                <h3>Стили</h3>
                <p class="off">Стиль</p>
                <p>Таблица</p>
                <p class="off">Просмотр</p>
                <p class="off">Тип</p>
                <h3>Разное</h3>
                <p>Знак</p>
                <p>Знак</p>
                <p>Печать</p>
                <p>Имя</p>
                <p>Вид</p>
            </aside>

            <section class="doc">
                <div class="doctabs"></div>
                <svg class="plan" viewBox="1060 145 807 793" preserveAspectRatio="xMaxYMin meet">
                    <defs>
                        <g id="light">
                            <rect x="-10" y="-10" width="20" height="20" fill="none" stroke="#1fc4c8" stroke-width="3" />
                            <circle r="7" fill="#12b9bd" />
                            <circle r="4" fill="#1ceaee" />
                        </g>
                        <g id="switch" fill="none" stroke="#1fc4c8" stroke-width="2">
                            <circle r="4" />
                            <path d="M0-4V-17M-3-17H3" stroke-width="3" />
                        </g>
                        <path id="hatched" d="M1318 543V257H1355M1407 257H1453L1467 242M1577 242L1592 257H1636M1689 257H1726V384H1750L1771 406M1794 446Q1801 460 1802 477M1802 522Q1801 540 1793 554M1771 594L1750 615H1726V740H1686M1633 740H1598M1318 568V596H1176V622M1176 662V687M1176 728V755M1176 796V847H1206M1302 847H1346M1441 847H1472V740H1484M1515 740H1540M1368 614H1454V738M1548 651H1533V697M1533 702V723M1590 651H1606V697M1606 702V723M1483 231L1504 224M1540 224L1561 231" />
                    </defs>

                    <path class="frame" d="M1867 158H1070V937H1867" />

                    <!-- walls -->
                    <use href="#hatched" class="wall" />
                    <use href="#hatched" class="core" />
                    <path class="white" d="M1448 251H1313V590H1170V626M1138 626H1191M1138 626A32 32 0 0 0 1170 658H1191M1170 658V757H1179M1178 622H1191M1178 662H1191M1178 687H1191M1178 728H1191M1178 755H1191M1178 796H1191M1170 690H1178M1170 727H1178M1179 687V728M1181 687V728M1179 755V796M1181 755V796M1179 795H1170V852H1211" />
                    <path class="white" d="M1448 251A96 96 0 0 1 1596 251H1732V379H1754A157 157 0 0 1 1752 621H1732V797H1704V770H1731M1727 746V770M1731 746H1594V724H1709V599M1709 612H1612V724M1598 724V741" />
                    <path class="white" d="M1357 251V260M1404 251V260M1354 260H1407M1354 261H1407M1354 259V271M1407 259V271M1639 251V260M1687 251V260M1637 260H1690M1637 261H1690M1637 259V271M1690 259V271M1466 271H1470" />
                    <path class="white" d="M1467 234L1476 253M1493 221L1499 240M1507 217V239M1537 217V239M1551 221L1545 240M1577 234L1568 253M1470 243L1495 231M1469 241L1494 229M1507 226H1537M1507 228H1537M1549 231L1575 243M1550 229L1576 241" />
                    <path class="white" d="M1758 413L1777 403M1779 450L1798 441M1787 477L1809 477M1787 521L1809 521M1779 549L1798 557M1758 585L1777 596M1771 407L1790 444M1769 408L1788 445M1799 478V521M1800 478V521M1793 554L1771 592M1791 553L1769 591" />
                    <path class="white" d="M1313 545H1322M1313 567H1322M1321 543V568M1323 543V568M1321 543H1333M1321 568H1333M1333 501V612M1333 599H1337V643M1333 514H1479M1368 599H1479M1368 612H1486M1368 599V612M1337 643Q1352 642 1360 631M1471 386H1609M1709 386V399M1612 399V501" />
                    <path class="white" d="M1470 644V724H1544V746H1476V852M1540 724V741M1485 724V735M1515 724V741M1485 735H1515M1485 737H1515M1487 738V746M1514 738V746M1633 724V741M1685 724V741M1633 735H1685M1633 737H1685M1635 738V746M1682 738V746M1527 724V649H1513M1481 613V649H1470M1481 613Q1511 616 1513 649" />
                    <path class="white" d="M1609 616H1637Q1634 639 1612 641H1609M1646 668H1709M1646 672H1709M1646 668V672M1535 698H1549M1535 700H1549M1590 698H1603M1590 700H1603M1549 698V710M1549 710Q1557 708 1559 700Q1564 728 1589 732V698" />
                    <path class="white" d="M1206 832V848M1302 832V848M1346 832V848M1441 832V848M1211 832V896A44 44 0 0 0 1255 853A44 44 0 0 0 1298 896V832M1298 852H1350M1350 832V896A44 44 0 0 0 1393 853A44 44 0 0 0 1437 896V832M1437 852H1700M1476 848H1700" />

                    <!-- stairs -->
                    <path class="white" d="M1376 514V599M1385 514V599M1396 514V599M1407 514V599M1417 514V599M1428 514V599M1438 514V599M1448 514V599M1459 514V599M1469 514V599" />
                    <path d="M1377 555H1478V557H1377z" fill="#000" />
                    <path class="white" d="M1376 554H1479M1376 558H1479M1376 534H1479M1382 529L1376 534L1382 540M1439 528L1433 534L1439 540M1376 579H1479M1473 574L1479 579L1473 584M1404 554L1439 514M1411 554L1446 514M1416 530L1430 541L1418 538L1428 531" />
                    <circle class="white" cx="1376" cy="579" r="2" />
                    <circle class="pink" cx="1480" cy="534" r="2" />
                    <path class="white" d="M1704 794H1606V848M1606 797H1704M1617 797V848M1627 797V848M1637 797V848M1647 797V848M1658 797V848M1668 797V848M1679 797V848M1689 797V848M1700 797V852M1606 825H1700M1612 820L1606 825L1612 830" />
                    <circle class="white" cx="1700" cy="825" r="3" />

                    <!-- room outlines -->
                    <path class="pink" d="M1333 501V271H1466V427H1333M1333 431H1466V501H1333M1470 501V258A78 78 0 0 1 1573 258V271H1709V386H1609M1470 501H1503V514M1479 514V599H1486V612H1470V644H1548V660Q1557 657 1559 650Q1564 677 1589 680V644H1608V612H1591V599H1608V514H1578V501H1612V599H1745A138 138 0 0 0 1745 399H1609" />
                    <path class="pink" d="M1191 612H1329V615H1452V738H1455V832H1191zM1436 418Q1437 390 1462 388M1436 418H1466" />
                    <path class="white" d="M1343 427V456Q1361 452 1367 432V427M1479 514H1503" />

                    <!-- cabling -->
                    <path class="wire" d="M1367 310H1433V388M1367 388H1462M1367 466H1462M1367 436V466M1462 380V482H1473M1466 381H1651V358M1530 300V358H1650V300M1608 381V495H1587M1533 444H1608M1534 444V561M1545 561V597H1367V621M1611 407H1653V566H1737V433M1372 623V649M1235 649H1408V795M1235 722H1408M1235 795H1408M1473 389V418M1477 442V468H1481V472" />
                    <path d="M1471 392L1493 368" stroke="#f0f" stroke-width="2" />
                    <path d="M1481 381L1490 372" stroke="#f0f" stroke-width="5" />
                    <circle cx="1473" cy="389" r="5" fill="#f0f" />
                    <path class="mark" d="M1398 311h4l-2 2zM1398 387h4l-2-2zM1398 467h4l-2 2zM1445 387h4l-2-2zM1445 465h4l-2-2zM1432 347v4l-2-2zM1589 357h4l-2-2zM1531 327v4l2-2zM1649 327v4l-2-2zM1532 382h4l-2 2zM1630 380h4l-2-2zM1569 443h4l-2-2zM1535 501v4l2-2zM1652 465v4l-2-2zM1738 465v4l2-2zM1652 531v4l-2-2zM1738 531v4l2-2zM1694 567h4l-2 2zM1454 598h4l-2 2zM1276 648h4l-2-2zM1345 648h4l-2-2zM1389 648h4l-2-2zM1276 723h4l-2 2zM1363 723h4l-2 2zM1276 796h4l-2 2zM1363 796h4l-2 2zM1409 683v4l2-2zM1409 756v4l2-2zM1606 391v4l-2-2zM1606 423v4l-2-2zM1606 467v4l-2-2zM1594 494h4l-2-2zM1634 408h4l-2 2z" />

                    <!-- fixtures -->
                    <use href="#light" x="1367" y="310" /><use href="#light" x="1433" y="310" />
                    <use href="#light" x="1367" y="388" /><use href="#light" x="1433" y="388" />
                    <use href="#light" x="1367" y="466" /><use href="#light" x="1433" y="466" />
                    <use href="#light" x="1530" y="300" /><use href="#light" x="1650" y="300" />
                    <use href="#light" x="1530" y="358" /><use href="#light" x="1650" y="358" />
                    <use href="#light" x="1533" y="444" /><use href="#light" x="1545" y="561" />
                    <use href="#light" x="1654" y="433" /><use href="#light" x="1737" y="433" />
                    <use href="#light" x="1654" y="499" /><use href="#light" x="1737" y="499" />
                    <use href="#light" x="1654" y="566" /><use href="#light" x="1737" y="566" />
                    <use href="#light" x="1235" y="649" /><use href="#light" x="1321" y="649" /><use href="#light" x="1408" y="649" />
                    <use href="#light" x="1235" y="722" /><use href="#light" x="1321" y="722" /><use href="#light" x="1408" y="722" />
                    <use href="#light" x="1235" y="795" /><use href="#light" x="1321" y="795" /><use href="#light" x="1408" y="795" />
                    <use href="#switch" transform="translate(1461 380) rotate(-60)" />
                    <use href="#switch" transform="translate(1614 381) rotate(30)" />
                    <use href="#switch" transform="translate(1584 495) rotate(30)" />
                    <use href="#switch" transform="translate(1618 406) rotate(125)" />
                    <use href="#switch" transform="translate(1618 406) rotate(140)" />
                    <use href="#switch" transform="translate(1372 436) rotate(210)" />
                    <use href="#switch" transform="translate(1373 621) rotate(210)" />
                    <use href="#switch" transform="translate(1373 621) rotate(228)" />
                    <rect x="1472" y="419" width="9" height="23" fill="none" stroke="#1fc4c8" stroke-width="3" />
                    <rect x="1473" y="471" width="15" height="23" fill="#1ceaee" stroke="#1fc4c8" stroke-width="2" />

                    <!-- cursor and view marker -->
                    <path class="white" d="M1222 403H1317M1270 356V452M1266 399H1275V408H1266z" />
                    <path d="M1725 886V890M1725 894V898M1725 902V938M1722 913L1711 920L1722 927zM1728 913L1739 920L1728 927z" fill="none" stroke="#d8d8d8" stroke-width="2" />
                </svg>
                <div class="hscroll big">
                    <button aria-label="Влево"><svg class="icon"><use href="#i-left" /></svg></button>
                    <i class="thumb"></i>
                    <button aria-label="Вправо"><svg class="icon"><use href="#i-right" /></svg></button>
                    <i class="corner"></i>
                </div>
            </section>

            <div class="vbar">
                <i class="grip"></i>
                <button aria-label="Стереть"><svg class="icon"><use href="#i-brush" /></svg></button>
                <button aria-label="Зеркало"><svg class="icon"><use href="#i-mirror" /></svg></button>
                <button aria-label="Симметрия"><svg class="icon"><use href="#i-offset" /></svg></button>
                <button aria-label="Подобие"><svg class="icon"><use href="#i-contour" /></svg></button>
                <button aria-label="Массив"><svg class="icon"><use href="#i-array" /></svg></button>
                <i class="sep"></i>
                <button aria-label="Переместить"><svg class="icon"><use href="#i-move" /></svg></button>
                <button aria-label="Повернуть"><svg class="icon"><use href="#i-rotate" /></svg></button>
                <i class="sep"></i>
                <button class="scale">1:2</button>
                <button aria-label="Растянуть"><svg class="icon"><use href="#i-stretch" /></svg></button>
                <i class="sep"></i>
                <button aria-label="Обрезать"><svg class="icon"><use href="#i-trim" /></svg></button>
                <button aria-label="Удлинить"><svg class="icon"><use href="#i-extend" /></svg></button>
                <button aria-label="Продлить"><svg class="icon"><use href="#i-extend2" /></svg></button>
                <button aria-label="Разорвать"><svg class="icon"><use href="#i-break" /></svg></button>
                <button aria-label="Разорвать в точке"><svg class="icon"><use href="#i-break1" /></svg></button>
                <button aria-label="Соединить"><svg class="icon"><use href="#i-join" /></svg></button>
                <i class="sep"></i>
                <button aria-label="Фаска"><svg class="icon"><use href="#i-chamfer" /></svg></button>
                <button aria-label="Сопряжение"><svg class="icon"><use href="#i-fillet" /></svg></button>
                <i class="sep"></i>
                <button aria-label="Расчленить"><svg class="icon"><use href="#i-bomb" /></svg></button>
                <button aria-label="Взорвать"><svg class="icon"><use href="#i-explode" /></svg></button>
                <i class="grip"></i>
                <button aria-label="На передний план"><svg class="icon"><use href="#i-front" /></svg></button>
                <button aria-label="На задний план"><svg class="icon"><use href="#i-back" /></svg></button>
                <button aria-label="Перед объектом"><svg class="icon"><use href="#i-above" /></svg></button>
                <button aria-label="За объектом"><svg class="icon"><use href="#i-under" /></svg></button>
                <button class="abc">ABC<svg class="icon"><use href="#i-sheet" /></svg></button>
                <button aria-label="Размеры вперед"><svg class="icon"><use href="#i-dimfront" /></svg></button>
                <button aria-label="Все вперед"><svg class="icon"><use href="#i-allfront" /></svg></button>
                <button aria-label="Штриховки назад"><svg class="icon"><use href="#i-hatchback" /></svg></button>
            </div>

            <div class="vbar">
                <i class="grip"></i>
                <button aria-label="Авторазмер"><svg class="icon"><use href="#i-dimh" /></svg></button>
                <button aria-label="Линейный"><svg class="icon"><use href="#i-dimh" /></svg></button>
                <button aria-label="Вертикальный"><svg class="icon"><use href="#i-dimv" /></svg></button>
                <button aria-label="Параллельный"><svg class="icon"><use href="#i-dimd" /></svg></button>
                <button aria-label="Горизонтальный"><svg class="icon"><use href="#i-dimh" /></svg></button>
                <i class="sep"></i>
                <button aria-label="Диаметр"><svg class="icon"><use href="#i-dimdia" /></svg></button>
                <button aria-label="Радиус"><svg class="icon"><use href="#i-dimrad" /></svg></button>
                <button aria-label="Радиус с изломом"><svg class="icon"><use href="#i-dimjog" /></svg></button>
                <button aria-label="Угловой"><svg class="icon"><use href="#i-dimang" /></svg></button>
                <button aria-label="Длина дуги"><svg class="icon"><use href="#i-dimarc" /></svg></button>
                <i class="sep"></i>
                <button aria-label="Быстрый размер"><svg class="icon"><use href="#i-dimq" /></svg></button>
                <button aria-label="Базовый"><svg class="icon"><use href="#i-dimbase" /></svg></button>
                <button aria-label="Цепь"><svg class="icon"><use href="#i-dimcont" /></svg></button>
                <i class="sep"></i>
                <button aria-label="Разрыв размера"><svg class="icon"><use href="#i-dimcut" /></svg></button>
                <button aria-label="Разрыв выноски"><svg class="icon"><use href="#i-dimcut2" /></svg></button>
                <svg class="pointer" viewBox="0 0 12 18"><path d="M1 1v13l3-3 2 5 3-1-2-5h4z" fill="#fff" stroke="#000" /></svg>
            </div>
        </main>

        <section class="command">
            <div class="cmdside"><span>×</span><span>К</span></div>
            <div class="cmdbody">
                <div class="log">
                    <p>Command<br>Exit</p>
                    <div class="vscroll">
                        <button aria-label="Вверх"><svg class="icon"><use href="#i-up" /></svg></button>
                        <button aria-label="Вниз"><svg class="icon"><use href="#i-down" /></svg></button>
                    </div>
                </div>
                <label class="prompt">Команда:<input type="text"></label>
            </div>
        </section>

        <footer class="status">
            <span class="coords">3022.7788,14786.3209,0.0000</span>
            <div class="toggles">
                <button>ШАГ</button><button>СЕТКА</button><button class="on">оПРИВЯЗКА</button><button class="on">ОТС-ОБЪЕКТ</button><button class="on">ОТС-ПОЛЯР</button><button>ОРТО</button><button class="on first">ВЕС</button><button class="on">ШТРИХОВКА</button>
            </div>
            <div class="views">
                <button aria-label="Выбор"><svg class="icon"><use href="#i-select" /></svg></button>
                <button aria-label="Подсветка" class="on"><svg class="icon"><use href="#i-bulb" /></svg></button>
                <button aria-label="Запрет выбора" class="on"><svg class="icon"><use href="#i-nosel" /></svg></button>
                <button aria-label="Вкладки"><svg class="icon"><use href="#i-tabs" /></svg></button>
                <button aria-label="Сетка"><svg class="icon"><use href="#i-grid" /></svg></button>
                <button class="mscale">M1:1</button>
                <button aria-label="Рука"><svg class="icon"><use href="#i-hand" /></svg></button>
                <button aria-label="Масштаб"><svg class="icon"><use href="#i-zoom" /></svg></button>
                <button aria-label="Рамка"><svg class="icon"><use href="#i-zoomred" /></svg></button>
                <button aria-label="Все"><svg class="icon"><use href="#i-zoomext" /></svg></button>
                <button aria-label="Обновить"><svg class="icon"><use href="#i-regen" /></svg></button>
                <button aria-label="Полный экран"><svg class="icon"><use href="#i-full" /></svg></button>
            </div>
        </footer>
    </div>

    <section class="dialog" role="dialog" aria-labelledby="dlgtitle">
        <header class="dlghead">
            <h2 id="dlgtitle">Электротехническая модель</h2>
            <div class="winbtns">
                <button class="resize" aria-label="Растянуть"><svg class="icon"><use href="#i-hresize" /></svg></button>
                <button aria-label="Свернуть"><svg class="icon"><use href="#i-min" /></svg></button>
                <button aria-label="Развернуть"><svg class="icon"><use href="#i-max" /></svg></button>
                <button class="close" aria-label="Закрыть диалог"><svg class="icon"><use href="#i-x" /></svg></button>
            </div>
        </header>
        <div class="client">
            <nav class="dlgmenu"><button>Модель</button><button>Электрика</button></nav>
            <div class="dlgtools">
                <i class="grip"></i>
                <button aria-label="Обновить"><svg class="icon"><use href="#i-refresh" /></svg></button>
                <button aria-label="Проверить"><svg class="icon"><use href="#i-check" /></svg></button>
                <i class="grip"></i>
                <button aria-label="Калькулятор"><svg class="icon"><use href="#i-calc" /></svg></button>
            </div>
            <div class="tabs" role="tablist">
                <button role="tab">Оборудование</button><button role="tab">Подсоединения</button><button role="tab" class="active">Расчеты</button>
            </div>
            <div class="panes">
                <div class="left">
                    <div class="combo">
                        <select aria-label="Фильтр"><option>Все</option></select>
                        <svg class="icon"><use href="#i-down" /></svg>
                    </div>
                    <div class="tree panels">
                        <div class="node violet d0"><svg class="icon"><use href="#i-box" /></svg>ЩР-1 [ПР11-3074-21 У3]</div>
                        <div class="node violet d0"><svg class="icon"><use href="#i-box" /></svg>ЩО-1 [ПР11-1046-21 У3]</div>
                        <div class="node blue d1"><svg class="icon"><use href="#i-input" /></svg>Верхние зажимы: Ввод: 1 (ABC, ВА61F29-3ВХХ)</div>
                        <div class="node blue d1"><i class="open"></i><svg class="icon"><use href="#i-bus" /></svg>Секция шин</div>
                        <div class="node blue d2"><svg class="icon"><use href="#i-breaker" /></svg>Ввод: 1 (ABC, ВА61F29-3ВХХ)</div>
                        <div class="node blue d2 picked"><i class="shut"></i><span><svg class="icon"><use href="#i-breaker" /></svg>Гр: 1 (A, АЕ2044-100)</span></div>
                        <div class="node blue d2"><i class="shut"></i><svg class="icon"><use href="#i-breaker" /></svg>Гр: 2 (B, АЕ2044-100)</div>
                        <div class="node blue d2"><i class="shut"></i><svg class="icon"><use href="#i-breaker" /></svg>Гр: 3 (C, АЕ2044-100)</div>
                        <div class="node blue d2"><svg class="icon"><use href="#i-breaker" /></svg>Гр: 4 (A, АЕ2044-100)</div>
                        <div class="node blue d2"><svg class="icon"><use href="#i-breaker" /></svg>Гр: 5 (B, АЕ2044-100)</div>
                        <div class="node blue d2"><i class="shut"></i><svg class="icon"><use href="#i-breaker" /></svg>Гр: 6 (C, АЕ2044-100)</div>
                        <div class="node violet d0"><svg class="icon"><use href="#i-box" /></svg>ЩО-2 [ПР11-1046-21 У3]</div>
                        <div class="hscroll">
                            <button aria-label="Влево"><svg class="icon"><use href="#i-left" /></svg></button>
                            <i class="thumb"></i>
                            <button aria-label="Вправо"><svg class="icon"><use href="#i-right" /></svg></button>
                        </div>
                    </div>
                </div>
                <i class="splitter"></i>
                <div class="tree checks">
                    <div class="node d1"><i class="open"></i><svg class="icon"><use href="#i-calc" /></svg>Расчёт мощностей</div>
                    <div class="node d2"><i class="open"></i><svg class="icon"><use href="#i-net" /></svg>Распределительная/групповая сеть</div>
                    <div class="node d3"><svg class="icon"><use href="#i-lamp" /></svg>Светильник: ARS/R 418 (595)</div>
                    <div class="node d3"><svg class="icon"><use href="#i-lamp" /></svg>Светильник: ARS/R 418 (595)</div>
                    <div class="node d3"><svg class="icon"><use href="#i-lamp" /></svg>Светильник: ARS/R 418 (595)</div>
                    <div class="node d3"><svg class="icon"><use href="#i-lamp" /></svg>Светильник: ARS/R 418 (595)</div>
                    <div class="node d3"><svg class="icon"><use href="#i-lamp" /></svg>Светильник: ARS/R 418 (595)</div>
                    <div class="node d3"><svg class="icon"><use href="#i-lamp" /></svg>Светильник: ARS/R 418 (595)</div>
                    <div class="node d3"><svg class="icon"><use href="#i-lamp" /></svg>Светильник: ARS/R 418 (595)</div>
                    <div class="node d3"><svg class="icon"><use href="#i-lamp" /></svg>Светильник: ARS/R 418 (595)</div>
                    <label class="node blue d2"><i class="open"></i><input type="checkbox" checked>Проверки</label>
                    <label class="node blue d3"><i class="open"></i><input type="checkbox" checked>Проверки коммутационных аппаратов</label>
                    <label class="node blue d4"><input type="checkbox" checked>Ir &gt; Iр</label>
                    <label class="node blue d4"><input type="checkbox" checked>Im &lt; Iкз 1ф min</label>
                    <label class="node blue d4"><input type="checkbox" checked>Ics &gt; Iкз max</label>
                    <label class="node blue d4"><input type="checkbox" checked>Icm &gt; Iкз уд</label>
                    <label class="node blue d3"><i class="open"></i><input type="checkbox" checked>Проверки кабелей</label>
                    <label class="node blue d4"><i class="open"></i><input type="checkbox" checked>Ir &lt;= Iд.д.</label>
                    <label class="node blue d5"><i class="open"></i><input type="checkbox" checked>ЩО-1 : Гр: 1 (A, АЕ2044-100)</label>
                    <label class="node blue d6"><input type="checkbox" checked>Iд.д. &gt; Ir (ВВГнг-LS 3x2.5 ож)</label>
                    <label class="node blue d6"><input type="checkbox" checked>Iд.д. &gt; Ir (ВВГнг-LS 4x2.5 ож)</label>
                    <label class="node blue d6"><input type="checkbox" checked>Iд.д. &gt; Ir (ВВГнг-LS 2x2.5 ож)</label>
                    <label class="node blue d4"><i class="open"></i><input type="checkbox" checked>Iд.д. &gt; Iр.</label>
                    <label class="node blue d5"><i class="open"></i><input type="checkbox" checked>ЩО-1 : Гр: 1 (A, АЕ2044-100)</label>
                    <label class="node blue d6"><input type="checkbox" checked>Iд.д. &gt; Iр (ВВГнг-LS 3x2.5 ож)</label>
                    <label class="node blue d6"><input type="checkbox" checked>Iд.д. &gt; Iр (ВВГнг-LS 4x2.5 ож)</label>
                    <label class="node blue d6"><input type="checkbox" checked>Iд.д. &gt; Iр (ВВГнг-LS 2x2.5 ож)</label>
                    <label class="node blue d4"><i class="open"></i><input type="checkbox" checked>Тдоп &gt; Тнагр</label>
                    <label class="node blue d5"><i class="open"></i><input type="checkbox" checked>ЩО-1 : Гр: 1 (A, АЕ2044-100)</label>
                    <label class="node blue d6"><input type="checkbox" checked>Тдоп &gt; Тнагр (ВВГнг-LS 3x2.5 ож)</label>
                    <label class="node blue d6"><input type="checkbox" checked>Тдоп &gt; Тнагр (ВВГнг-LS 4x2.5 ож)</label>
                    <label class="node blue d6"><input type="checkbox" checked>Тдоп &gt; Тнагр (ВВГнг-LS 2x2.5 ож)</label>
                    <label class="node blue d4"><input type="checkbox" checked>ΔU &lt; ΔUдоп:ЩО-1\Гр: 1 (A, АЕ2044-100):ЩО-1</label>
                </div>
                <div class="right">
                    <div class="gridbox">
                        <table class="values">
                            <colgroup><col class="namecol"><col></colgroup>
                            <tr class="cat"><th colspan="2"><i class="open"></i>Расчетные величины</th></tr>
                            <tr><td><i class="shut"></i>Pуст, кВт</td><td>0,58</td></tr>
                            <tr><td><i class="shut"></i>Pрасч, кВт</td><td>0,58</td></tr>
                            <tr><td><i class="shut"></i>Iрасч, А</td><td>3,08</td></tr>
                            <tr><td><i class="shut"></i>Iпуск, А</td><td>3,08</td></tr>
                            <tr><td><i class="shut"></i>Коэф мощности</td><td>0,85</td></tr>
                            <tr class="ro"><td>Разн. загрузки фаз, %</td><td>0 %</td></tr>
                            <tr><td><i class="shut"></i>Нагрузка A, Ia</td><td>3,08</td></tr>
                            <tr><td><i class="shut"></i>Нагрузка B, Ib</td><td>0</td></tr>
                            <tr><td><i class="shut"></i>Нагрузка C, Ic</td><td>0</td></tr>
                            <tr class="ro"><td>Iутечки, мА</td><td>1,63 мА</td></tr>
                            <tr class="cat"><th colspan="2"><i class="open"></i>Падение напряжения</th></tr>
                            <tr class="ro"><td>ΔU верхнее, %</td><td>0,3 %</td></tr>
                            <tr class="ro"><td>ΔU нижнее, %</td><td>0,15 %</td></tr>
                            <tr class="ro"><td>ΔU суммарное, %</td><td>0,45 %</td></tr>
                            <tr class="cat"><th colspan="2"><i class="open"></i>Токи КЗ</th></tr>
                            <tr><td><i class="shut"></i>Токи КЗ</td><td>Расчеты токов КЗ</td></tr>
                            <tr class="cat"><th colspan="2"><i class="open"></i>Расчетные величины (нормальный режим)</th></tr>
                            <tr class="ro"><td>Pуст, кВт</td><td>0,58</td></tr>
                            <tr class="ro"><td>Pрасч, кВт</td><td>0,58</td></tr>
                            <tr class="ro"><td>Iрасч, А</td><td>3,08</td></tr>
                            <tr class="ro"><td>Коэф мощности</td><td>0,85</td></tr>
                            <tr class="ro"><td>Iпуск, А</td><td>3,08</td></tr>
                            <tr class="ro"><td>Нагрузка A, Ia</td><td>3,08</td></tr>
                            <tr class="ro"><td>Нагрузка B, Ib</td><td>0</td></tr>
                            <tr class="ro"><td>Нагрузка C, Ic</td><td>0</td></tr>
                            <tr class="ro"><td>Разн. загрузки фаз, %</td><td>0</td></tr>
                        </table>
                    </div>
                    <div class="hint"></div>
                </div>
            </div>
            <div class="dlgfoot"><button>Закрыть</button></div>
        </div>
    </section>
</body>

</html>
```

FILE: styles.css
```css
* {
    box-sizing: border-box;
}

body {
    margin: 0;
    background-color: #525252;
    font-family: "Open Sans", "Noto Sans", sans-serif;
    font-size: 12px;
    color: #000;
    overflow: hidden;
}

h1, h2, h3, p {
    margin: 0;
    font-weight: normal;
}

button {
    padding: 0;
    border: 0;
    background: none;
    font: inherit;
    color: inherit;
}

select, input {
    font: inherit;
    border-radius: 0;
    margin: 0;
}

select {
    appearance: none;
}

.sprite {
    position: absolute;
    width: 0;
    height: 0;
}

.icon {
    width: 18px;
    height: 18px;
    display: block;
    flex: none;
}

.app {
    height: 100vh;
    display: grid;
    grid-template-columns: minmax(0, 1fr);
    grid-template-rows: 23px 27px 24px 24px 24px minmax(0, 1fr) 53px 24px;
}

/* title bars */

.titlebar, .dlghead {
    display: grid;
    grid-template-columns: 1fr auto 1fr;
    background-color: #efc768;
    color: #3f361e;
}

.titlebar {
    align-items: center;
    border-bottom: 1px solid #b59a58;
    padding-left: 1px;
}

.titlebar h1, .dlghead h2 {
    font-size: 14px;
    line-height: 22px;
    grid-column: 2;
}

.titlebar h1 {
    font-family: "Noto Sans", sans-serif;
}

.winbtns {
    display: flex;
    justify-content: flex-end;
    align-self: start;
    padding-right: 3px;
}

.winbtns button {
    width: 26px;
    height: 19px;
    display: flex;
    justify-content: center;
}

.winbtns .resize {
    margin-right: 25px;
}

.winbtns .close {
    width: 45px;
    background-color: #c75050;
}

/* menu and toolbars */

.menubar {
    display: flex;
    align-items: center;
    gap: 15px;
    padding-bottom: 1px;
    color: #fff;
    font-size: 11px;
}

.menubar .grip {
    margin-right: -14px;
}

.grip {
    width: 10px;
    height: 16px;
    margin-left: 4px;
    margin-right: -4px;
    flex: none;
    background: repeating-linear-gradient(#444 0 2px, transparent 2px 4px) 0 0 / 2px 16px no-repeat;
}

.menubar .grip {
    background: repeating-linear-gradient(#ddd 0 2px, transparent 2px 4px) 0 0 / 2px 16px no-repeat;
}

.toolrow {
    display: flex;
    gap: 1px;
}

.toolbar {
    height: 23px;
    display: flex;
    align-items: center;
    background: linear-gradient(#c9ccd2, #989da7);
    border-radius: 3px;
    flex: none;
}

.toolbar button {
    width: 21px;
    display: flex;
    justify-content: center;
}

.toolbar .sep {
    width: 8px;
    height: 21px;
    background: linear-gradient(#fff, #fff) 3px 0 / 1px 100% no-repeat;
}

.toolbar .thin {
    width: 5px;
}

.toolbar select {
    height: 20px;
    background-color: #fff;
    border: 1px solid #eee;
    border-top: 2px solid #666;
    border-left: 2px solid #666;
    padding: 0 2px;
    font-family: "Liberation Sans", Arial, sans-serif;
    font-size: 11px;
}

.toolbar .style {
    width: 204px;
}

.layers {
    width: 65%;
}

.layers .grow {
    flex: 1;
}

.toolbar .ltype {
    width: 144px;
    padding-left: 60px;
    background: linear-gradient(#000, #000) 4px 8px / 56px 1px no-repeat #fff;
}

/* work area */

.work {
    display: flex;
    gap: 2px;
    padding: 0 1px;
    align-items: flex-start;
    min-height: 0;
}

.vbar {
    position: relative;
    width: 22px;
    flex: none;
    padding-bottom: 2px;
    display: flex;
    flex-direction: column;
    align-items: center;
    background: linear-gradient(90deg, #c9ccd2, #989da7);
    border-radius: 3px;
}

.withtri {
    padding-bottom: 10px;
}

.vbar .grip {
    width: 14px;
    height: 10px;
    margin: 0;
    background: repeating-linear-gradient(90deg, #444 0 2px, transparent 2px 4px) 0 4px / 14px 2px no-repeat;
}

.vbar button {
    width: 21px;
    height: 21px;
    display: flex;
    justify-content: center;
    align-items: center;
    flex: none;
}

.vbar .more {
    background: linear-gradient(135deg, transparent 50%, #2f83d6 50%) 100% 100% / 5px 5px no-repeat;
}

.vbar .sep {
    width: 20px;
    height: 8px;
    background: linear-gradient(#fff, #fff) 0 3px / 100% 1px no-repeat;
}

.vbar .scale {
    font: 12px "Liberation Sans", sans-serif;
    color: #1f3f78;
}

.vbar .abc {
    flex-direction: column;
    overflow: hidden;
    font: bold 8px/8px "Liberation Sans", sans-serif;
}

.vbar .abc .icon {
    margin-top: -5px;
}

.pointer {
    position: absolute;
    left: 10px;
    top: 14px;
    width: 12px;
    height: 18px;
}

.props {
    width: 280px;
    height: 100%;
    background-color: #fff;
    border-bottom: 1px solid #999;
    font-size: 12px;
}

.props h2 {
    height: 20px;
    padding-left: 3px;
    font-size: 12px;
    line-height: 20px;
    background-color: #9c9c9c;
    color: #4c4c4c;
}

.propbar {
    height: 23px;
    padding: 1px;
    background-color: #999ea8;
}

.propbar button {
    width: 20px;
    height: 20px;
    border: 1px solid #a97922;
    background-color: #fbd68e;
    color: #1b4f9c;
    font-weight: bold;
}

.props p {
    height: 22px;
    padding-left: 13px;
    line-height: 21px;
    border-bottom: 1px solid #555;
}

.props .obj {
    padding-left: 4px;
    background-color: #e0e0e0;
    line-height: 24px;
}

.props .off {
    background-color: #e0e0e0;
}

.props h3 {
    height: 21px;
    padding-left: 3px;
    line-height: 20px;
    font-size: 12px;
    font-weight: bold;
    background: linear-gradient(#b9bcc2, #9a9ea6);
    border-bottom: 1px solid #555;
}

.doc {
    flex: 1;
    min-width: 0;
    height: 100%;
    display: grid;
    grid-template-rows: 22px minmax(0, 1fr) 22px;
    background-color: #fff;
    padding: 0 4px 3px 0;
    border-top: 1px solid #999;
}

.doctabs {
    position: relative;
    margin-right: -4px;
    margin-bottom: 2px;
    background: linear-gradient(#989da7, #cacdd3);
}

.doctabs::after {
    content: "";
    position: absolute;
    right: 7px;
    top: 7px;
    border: 5px solid transparent;
    border-top-color: #444;
}

.plan {
    width: 100%;
    height: 100%;
    background-color: #000;
    shape-rendering: crispEdges;
}

.frame {
    fill: none;
    stroke: #8ee68e;
}

.wall {
    fill: none;
    stroke: #fff;
    stroke-width: 5px;
}

.core {
    fill: none;
    stroke: #000;
    stroke-width: 3px;
    stroke-dasharray: 2 2;
}

.white {
    fill: none;
    stroke: #fff;
}

.pink {
    fill: none;
    stroke: #c9708f;
}

.wire {
    fill: none;
    stroke: #e815e8;
    stroke-width: 3px;
}

.mark {
    fill: #fff;
    stroke: #fff;
}

.hscroll {
    display: flex;
    height: 17px;
    background-color: #efefef;
    color: #a5a5a5;
}

.hscroll button {
    width: 17px;
}

.hscroll .thumb {
    flex: 1;
    margin: 0 27px 0 15px;
    background-color: #cdcdcd;
}

.big {
    height: 19px;
    margin-top: 2px;
    color: #444;
}

.big .thumb {
    margin: 1px 152px 2px 16px;
}

.big .thumb + button {
    margin-right: 8px;
}

.corner {
    width: 12px;
    height: 12px;
    align-self: flex-end;
    background: repeating-linear-gradient(135deg, transparent 0 2px, #999 2px 3px);
    clip-path: polygon(100% 0, 100% 100%, 0 100%);
}

/* command line */

.command {
    display: flex;
    margin: 3px 48px 0 25px;
    font: 11px "DejaVu Sans Mono", monospace;
}

.cmdside {
    width: 18px;
    background-color: #a3a3a3;
    color: #444;
    display: flex;
    flex-direction: column;
    align-items: center;
    justify-content: space-between;
    font-size: 14px;
}

.cmdside span:last-child {
    font-size: 11px;
    transform: rotate(-90deg);
}

.cmdbody {
    flex: 1;
    display: flex;
    flex-direction: column;
    background-color: #fff;
}

.log {
    height: 34px;
    display: flex;
    justify-content: space-between;
    border-top: 2px solid #888;
    border-left: 1px solid #888;
    border-bottom: 1px solid #fff;
    background-color: #efefef;
}

.log p {
    padding: 1px;
    line-height: 14px;
}

.vscroll {
    width: 18px;
    border-left: 1px solid #fff;
    color: #444;
}

.vscroll button {
    height: 15px;
}

.prompt {
    flex: 1;
    display: flex;
    align-items: center;
    border-top: 1px solid #777;
    padding-left: 1px;
}

.prompt input {
    flex: 1;
    border: 0;
    background: none;
    height: 14px;
}

/* status bar */

.status {
    display: flex;
    align-items: center;
    background: linear-gradient(#3d424d 40%, #2c2c2e 50%);
    font-size: 11px;
    line-height: 14px;
}

.coords {
    width: 215px;
    padding-left: 3px;
    color: #fff;
}

.toggles, .views {
    display: flex;
    align-items: center;
}

.toggles {
    gap: 1px;
}

.toggles button {
    height: 20px;
    padding: 0 3px 2px;
    border: 1px solid #8c8c8c;
    background: linear-gradient(#fff 40%, #dbe2ec 50%, #fff);
}

.toggles .on {
    border-color: #b27d2d;
    background: linear-gradient(#fcd9a8 35%, #f8b65a 50%, #fde29a);
}

.toggles .first {
    margin-left: 3px;
}

.views {
    margin-left: auto;
    height: 24px;
    padding-left: 4px;
    border-left: 2px solid #888;
    background: linear-gradient(#c9ccd2, #8d929c);
}

.views button {
    width: 22px;
    height: 20px;
    display: flex;
    align-items: center;
    justify-content: center;
    border: 1px solid #999;
    background: linear-gradient(#fff, #e1e6ee);
}

.views .on {
    background: linear-gradient(#fdebc8, #fad491);
    border-color: #c48d3a;
}

.views .mscale {
    width: 88px;
    font: 12px "Liberation Sans", sans-serif;
}

/* dialog window */

.dialog {
    position: absolute;
    left: 47px;
    top: 78px;
    bottom: 54px;
    width: 1015px;
    display: flex;
    flex-direction: column;
    padding: 0 6px 6px;
    border: 1px solid #a98d4a;
    background-color: #efc768;
    font: 11px "Liberation Sans", Arial, sans-serif;
}

.dlghead {
    height: 29px;
    flex: none;
}

.dlghead h2 {
    font-family: "Open Sans", sans-serif;
    line-height: 29px;
}

.dlghead .winbtns {
    padding-right: 0;
}

.client {
    flex: 1;
    min-height: 0;
    display: flex;
    flex-direction: column;
    border: 1px solid #b89c5c;
    background-color: #efefef;
}

.dlgmenu {
    height: 24px;
    flex: none;
    display: flex;
    gap: 19px;
    padding-left: 15px;
    border-bottom: 1px solid #fff;
    font: 11px "Open Sans", sans-serif;
}

.dlgtools {
    height: 26px;
    width: 112px;
    flex: none;
    display: flex;
    align-items: center;
    gap: 6px;
    padding: 0 3px;
    border-bottom: 1px solid #fff;
}

.dlgtools .grip {
    width: 2px;
    margin-right: 0;
    background: repeating-linear-gradient(#bbb 0 2px, transparent 2px 4px) 0 0 / 2px 16px no-repeat;
}

.dlgtools button {
    width: 22px;
    display: flex;
    justify-content: center;
}

.tabs {
    height: 22px;
    flex: none;
    display: flex;
    align-items: flex-end;
    padding-left: 5px;
}

.tabs button {
    height: 18px;
    padding: 0 5px;
    font-size: 11px;
    border: 1px solid #acacac;
    border-bottom: 0;
    border-left-color: #d0d0d0;
}

.tabs .active {
    height: 21px;
    padding: 0 8px 3px;
    background-color: #fff;
}

.panes {
    flex: 1;
    min-height: 0;
    display: grid;
    grid-template-columns: 258px 2px minmax(0, 1fr) 360px;
    column-gap: 1px;
    margin: 0 4px;
    padding: 1px 2px 2px;
    border: 1px solid #acacac;
    background-color: #fff;
}

.left {
    min-height: 0;
    display: flex;
    flex-direction: column;
}

.combo {
    position: relative;
    height: 20px;
    margin-bottom: 1px;
    flex: none;
}

.combo select {
    width: 100%;
    height: 20px;
    padding: 0 3px;
    border: 1px solid #acacac;
    background: linear-gradient(#f0f0f0, #e3e3e3);
    font-size: 11px;
}

.combo .icon {
    position: absolute;
    right: 0;
    top: 1px;
    color: #444;
}

.tree {
    flex: 1;
    min-height: 0;
    overflow: hidden;
    border: 1px solid #828790;
    background-color: #fff;
}

.panels {
    display: flex;
    flex-direction: column;
}

.panels .hscroll {
    margin-top: auto;
}

.splitter {
    background: repeating-conic-gradient(#333 0 25%, #fff 0 50%) 0 0 / 2px 2px;
}

.node {
    position: relative;
    height: 18px;
    flex: none;
    display: flex;
    align-items: center;
    gap: 5px;
    white-space: nowrap;
}

.blue {
    color: #0c0cbe;
}

.violet {
    color: #da7fda;
}

.d0 {
    padding-left: 3px;
}

.d1 {
    padding-left: 22px;
}

.d2 {
    padding-left: 41px;
}

.d3 {
    padding-left: 60px;
}

.d4 {
    padding-left: 79px;
}

.d5 {
    padding-left: 98px;
}

.d6 {
    padding-left: 117px;
}

.checks .node {
    margin-left: 3px;
}

.picked span {
    display: flex;
    align-items: center;
    gap: 5px;
    height: 18px;
    margin-left: -4px;
    padding: 0 3px 0 4px;
    background-color: #d4d4d4;
    border-radius: 3px;
}

.open, .shut {
    width: 6px;
    height: 6px;
    background-color: #34346c;
    clip-path: polygon(100% 0, 100% 100%, 0 100%);
}

.shut {
    width: 5px;
    height: 8px;
    clip-path: polygon(0 0, 100% 50%, 0 100%);
}

.node .open, .node .shut {
    margin-left: -18px;
    margin-right: 7px;
}

.node .shut {
    margin-right: 8px;
}

.node input {
    position: relative;
    appearance: none;
    width: 14px;
    height: 14px;
    margin: 0 2px;
    border: 1px solid #000;
    background-color: #fff;
}

.node input:checked::before {
    content: "";
    position: absolute;
    inset: 1px;
    background-color: #12c016;
    clip-path: polygon(0 50%, 25% 45%, 38% 65%, 78% 0, 100% 5%, 45% 100%, 20% 100%);
}

/* value grid */

.right {
    min-height: 0;
    display: flex;
    flex-direction: column;
    gap: 3px;
    margin-left: 3px;
}

.gridbox {
    flex: 1;
    border: 1px solid #828790;
}

.values {
    width: 100%;
    border-collapse: separate;
    border-spacing: 0;
    table-layout: fixed;
}

.namecol {
    width: 65%;
}

.values td {
    position: relative;
    height: 23px;
    padding: 0 5px;
    border-bottom: 1px solid #efefef;
}

.values td:first-child {
    padding-left: 19px;
    border-right: 1px solid #efefef;
}

.values th {
    position: relative;
    height: 17px;
    padding: 0 0 0 18px;
    text-align: left;
    background-color: #e2e2e2;
}

.values .ro td:last-child {
    color: #868686;
}

.values i {
    position: absolute;
    left: 9px;
    top: 7px;
}

.values th i {
    left: 3px;
    top: 4px;
}

.hint {
    height: 40px;
    border: 1px solid #9a9a9a;
    background-color: #e2e2e2;
}

.dlgfoot {
    height: 35px;
    flex: none;
    display: flex;
    justify-content: flex-end;
    align-items: center;
    padding: 2px 7px 0 0;
}

.dlgfoot button {
    width: 73px;
    height: 21px;
    border: 1px solid #acacac;
    background: linear-gradient(#f1f1f1, #e4e4e4);
    font-size: 11px;
}
```
